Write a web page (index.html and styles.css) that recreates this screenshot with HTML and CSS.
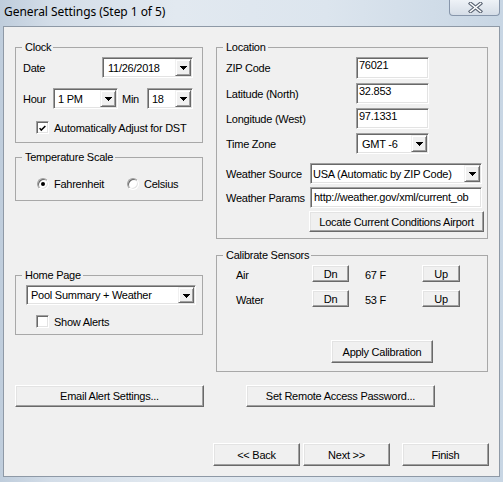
FILE: index.html
```html
<!DOCTYPE html>
<html>
<head>
<meta charset="utf-8">
<title>General Settings</title>
<link rel="stylesheet" href="styles.css">
</head>
<body>
<div class="window">
  <div class="titlebar">
    <div class="title">General Settings (Step 1 of 5)</div>
    <div class="close">
      <svg width="15" height="11" viewBox="0 0 15 11">
        <path d="M2.5 1.5 L12.5 9.5 M12.5 1.5 L2.5 9.5" stroke="#5c6675" stroke-width="3.6" stroke-linecap="square" fill="none"/>
        <path d="M2.5 1.5 L12.5 9.5 M12.5 1.5 L2.5 9.5" stroke="#ffffff" stroke-width="1.6" stroke-linecap="square" fill="none"/>
      </svg>
    </div>
  </div>
  <div class="client">
    <div class="main">
      <div class="col">
        <fieldset class="group g-clock">
          <legend>Clock</legend>
          <div class="clock-body">
            <div class="row">
              <span class="lbl">Date</span>
              <div class="combo field w-date"><span class="val pad5">11/26/2018</span><span class="drop"><svg width="7" height="4" viewBox="0 0 7 4"><polygon points="0,0 7,0 3.5,4" fill="#000"/></svg></span></div>
            </div>
            <div class="row r-hour">
              <span class="lbl w-hourlbl">Hour</span>
              <div class="combo field w-hour"><span class="val">1 PM</span><span class="drop"><svg width="7" height="4" viewBox="0 0 7 4"><polygon points="0,0 7,0 3.5,4" fill="#000"/></svg></span></div>
              <span class="lbl w-minlbl">Min</span>
              <div class="combo field w-min"><span class="val">18</span><span class="drop"><svg width="7" height="4" viewBox="0 0 7 4"><polygon points="0,0 7,0 3.5,4" fill="#000"/></svg></span></div>
            </div>
            <div class="row r-check r-dst">
              <span class="check field"><svg width="11" height="11" viewBox="0 0 11 11"><polyline points="2,5 4,7.5 9,2.5" fill="none" stroke="#000" stroke-width="1.8"/></svg></span>
              <span class="cklbl">Automatically Adjust for DST</span>
            </div>
          </div>
        </fieldset>

        <fieldset class="group g-temp">
          <legend>Temperature Scale</legend>
          <div class="temp-body">
            <div class="row r-radio">
              <div class="opt opt-f"><span class="radio on"></span><span class="cklbl">Fahrenheit</span></div>
              <div class="opt"><span class="radio"></span><span class="cklbl">Celsius</span></div>
            </div>
          </div>
        </fieldset>

        <fieldset class="group g-home">
          <legend>Home Page</legend>
          <div class="home-body">
            <div class="combo field w-home"><span class="val">Pool Summary + Weather</span><span class="drop"><svg width="7" height="4" viewBox="0 0 7 4"><polygon points="0,0 7,0 3.5,4" fill="#000"/></svg></span></div>
            <div class="row r-check r-alerts">
              <span class="check field"></span>
              <span class="cklbl">Show Alerts</span>
            </div>
          </div>
        </fieldset>
      </div>

      <div class="col">
        <fieldset class="group g-loc">
          <legend>Location</legend>
          <div class="loc-body">
            <div class="lrow"><span class="lbl w-loclbl">ZIP Code</span><div class="field edit w-edit">76021</div></div>
            <div class="lrow"><span class="lbl w-loclbl">Latitude (North)</span><div class="field edit w-edit">32.853</div></div>
            <div class="lrow"><span class="lbl w-loclbl">Longitude (West)</span><div class="field edit w-edit">97.1331</div></div>
            <div class="lrow"><span class="lbl w-loclbl">Time Zone</span><div class="combo field w-edit"><span class="val pad5">GMT -6</span><span class="drop"><svg width="7" height="4" viewBox="0 0 7 4"><polygon points="0,0 7,0 3.5,4" fill="#000"/></svg></span></div></div>
            <div class="lrow r-ws"><span class="lbl w-wslbl">Weather Source</span><div class="combo field w-ws"><span class="val pad2">USA (Automatic by ZIP Code)</span><span class="drop"><svg width="7" height="4" viewBox="0 0 7 4"><polygon points="0,0 7,0 3.5,4" fill="#000"/></svg></span></div></div>
            <div class="lrow r-wp"><span class="lbl w-wslbl">Weather Params</span><div class="field edit mid w-ws">http://weather.gov/xml/current_ob</div></div>
            <button class="btn locate">Locate Current Conditions Airport</button>
          </div>
        </fieldset>

        <fieldset class="group g-cal">
          <legend>Calibrate Sensors</legend>
          <div class="cal-body">
            <div class="crow"><span class="lbl w-cal">Air</span><button class="btn w-dn">Dn</button><span class="cval">67 F</span><button class="btn w-up">Up</button></div>
            <div class="crow r-water"><span class="lbl w-cal">Water</span><button class="btn w-dn">Dn</button><span class="cval">53 F</span><button class="btn w-up">Up</button></div>
            <button class="btn apply">Apply Calibration</button>
          </div>
        </fieldset>
      </div>
    </div>

    <div class="btnrow">
      <button class="btn wide">Email Alert Settings...</button>
      <button class="btn wide remote">Set Remote Access Password...</button>
    </div>

    <div class="nav">
      <button class="btn navbtn">&lt;&lt; Back</button>
      <button class="btn navbtn next">Next &gt;&gt;</button>
      <button class="btn navbtn finish">Finish</button>
    </div>
  </div>
</div>
</body>
</html>
```

FILE: styles.css
```css
* { box-sizing: border-box; }
html, body { margin: 0; padding: 0; }
body {
  width: 503px;
  height: 482px;
  overflow: hidden;
  font-family: "Liberation Sans", Arial, sans-serif;
  font-size: 11px;
  letter-spacing: -0.25px;
  color: #000;
  background: #c9d6e4;
}

.window {
  width: 503px;
  height: 482px;
  padding: 0 3px 5px 3px;
  display: flex;
  flex-direction: column;
  background: linear-gradient(to right, #bfcddc 0%, #d3dde8 10%, #e2e9f0 35%, #dce5ee 65%, #c8d6e4 100%);
}

.titlebar {
  flex: none;
  height: 26px;
  display: flex;
  justify-content: space-between;
  align-items: flex-start;
}
.title {
  font-family: "Noto Sans", "Open Sans", sans-serif;
  font-size: 12px;
  letter-spacing: -0.05px;
  line-height: 16px;
  margin: 4px 0 0 1px;
  color: #000;
}
.close {
  width: 51px;
  height: 16px;
  border: 1px solid #8796ab;
  border-top: none;
  border-radius: 0 0 4px 4px;
  background: linear-gradient(#eef2f7, #d5dde7);
  display: flex;
  align-items: center;
  justify-content: center;
  padding-left: 2px;
}

.client {
  flex: 1;
  background: #f0f0f0;
  border: 1px solid #8e99a6;
  padding: 14px 10px 0 11px;
  display: flex;
  flex-direction: column;
}

.main {
  display: grid;
  grid-template-columns: 188px 272px;
  column-gap: 13px;
  height: 331px;
}
.col { display: flex; flex-direction: column; }

.group {
  margin: 0;
  padding: 0;
  min-width: 0;
  border: 1px solid #a8a8a8;
}
legend {
  font-size: 11px;
  line-height: 13px;
  padding: 0 2px 0 3px;
  margin-left: 6px;
}

.g-clock { height: 102px; }
.g-temp { height: 50px; margin-top: 8px; }
.g-home { height: 66px; margin-top: 68px; }
.g-loc { height: 198px; }
.g-cal { height: 123px; margin-top: 10px; }

/* generic rows */
.row { display: flex; align-items: center; height: 21px; }
.lbl { white-space: nowrap; }

/* sunken field */
.field {
  background: #fff;
  border: 1px solid;
  border-color: #a0a0a0 #ffffff #ffffff #a0a0a0;
  box-shadow: inset 1px 1px 0 #696969, inset -1px -1px 0 #e3e3e3;
}

/* combo box */
.combo {
  display: flex;
  align-items: stretch;
  padding: 1px;
  height: 21px;
}
.combo .val {
  flex: 1;
  padding-left: 3px;
  display: flex;
  align-items: center;
  white-space: nowrap;
  overflow: hidden;
}
.combo .val.pad5 { padding-left: 4px; }
.combo .val.pad2 { padding-left: 1px; }
.drop {
  flex: none;
  width: 16px;
  background: #f0f0f0;
  border: 1px solid;
  border-color: #f0f0f0 #696969 #696969 #f0f0f0;
  box-shadow: inset 1px 1px 0 #ffffff, inset -1px -1px 0 #a0a0a0;
  display: flex;
  align-items: center;
  justify-content: center;
  padding-top: 1px;
}
.drop svg { display: block; shape-rendering: crispEdges; }

/* checkbox / radio */
.check {
  flex: none;
  width: 13px;
  height: 13px;
  padding: 1px;
  display: flex;
}
.check svg { display: block; }
.cklbl { margin-left: 5px; white-space: nowrap; }
.radio {
  flex: none;
  width: 12px;
  height: 12px;
  border-radius: 50%;
  background: #fff;
  border: 1px solid;
  border-color: #a0a0a0 #ffffff #ffffff #a0a0a0;
  box-shadow: inset 1px 1px 0 #696969, inset -1px -1px 0 #e3e3e3;
  display: flex;
  align-items: center;
  justify-content: center;
}
.radio.on::after {
  content: "";
  width: 4px;
  height: 4px;
  border-radius: 50%;
  background: #000;
}

/* buttons */
.btn {
  font-family: "Liberation Sans", Arial, sans-serif;
  font-size: 11px;
  letter-spacing: -0.25px;
  color: #000;
  background: #f0f0f0;
  border: 1px solid;
  border-color: #ffffff #696969 #696969 #ffffff;
  box-shadow: inset -1px -1px 0 #a0a0a0, inset 1px 1px 0 #e3e3e3;
  padding: 0;
  margin: 0;
  white-space: nowrap;
}

/* clock */
.clock-body { padding: 3px 9px 0 7px; }
.w-date { width: 91px; margin-left: auto; }
.r-hour { margin-top: 10px; }
.w-hourlbl { width: 30px; }
.w-hour { width: 65px; }
.w-minlbl { width: 25px; margin-left: 4px; }
.w-min { width: 46px; }
.r-check { height: 13px; }
.r-dst { margin-top: 12px; padding-left: 13px; }

/* temperature */
.temp-body { padding: 13px 0 0 21px; }
.r-radio { height: 13px; }
.opt { display: flex; align-items: center; }
.opt-f { width: 90px; }

/* home page */
.home-body { padding: 3px 0 0 10px; }
.w-home { width: 170px; height: 20px; }
.r-alerts { margin-top: 10px; padding-left: 10px; }

/* location */
.loc-body { padding: 3px 0 0 9px; }
.lrow { display: flex; align-items: center; height: 21px; margin-top: 4px; }
.lrow:first-child { margin-top: 0; height: 22px; }
.w-loclbl { width: 130px; }
.w-edit { width: 73px; height: 100%; }
.edit {
  padding: 1px 0 0 2px;
  line-height: 12px;
  white-space: nowrap;
  overflow: hidden;
}
.edit.mid { padding-top: 3px; padding-left: 3px; }
.r-ws { margin-top: 9px; }
.r-wp { margin-top: 3px; }
.w-wslbl { width: 84px; }
.w-ws { width: 172px; height: 100%; }
.locate { display: block; margin: 3px 0 0 83px; width: 175px; height: 21px; }

/* calibrate */
.cal-body { padding: 3px 0 0 19px; }
.crow { display: flex; align-items: center; height: 17px; }
.r-water { margin-top: 8px; }
.w-cal { width: 76px; padding-top: 3px; }
.w-dn { width: 37px; height: 17px; }
.w-up { width: 38px; height: 17px; }
.cval { width: 57px; margin-left: 16px; padding-top: 2px; }
.apply { display: block; margin: 33px 0 0 95px; width: 102px; height: 23px; }

/* bottom buttons */
.btnrow { display: flex; margin-top: 13px; }
.wide { width: 189px; height: 22px; }
.remote { margin-left: 42px; }

.nav { display: flex; justify-content: flex-end; margin-top: 36px; }
.navbtn { width: 87px; height: 23px; }
.next { margin-left: 3px; }
.finish { margin-left: 12px; }
```
